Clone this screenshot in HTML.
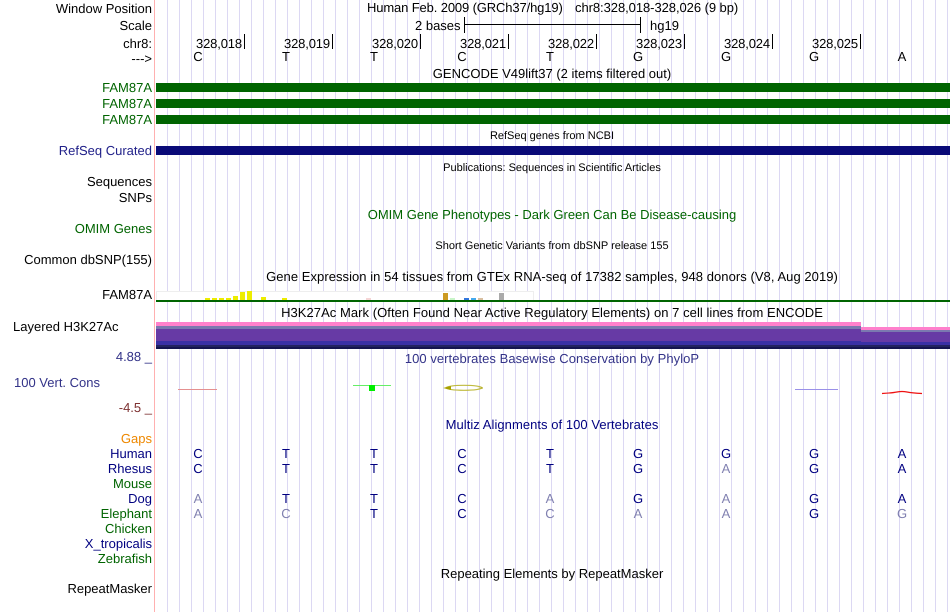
<!DOCTYPE html>
<html><head><meta charset="utf-8"><style>
html,body{margin:0;padding:0;background:#fff}
#p{position:relative;width:950px;height:612px;overflow:hidden;background:#fff;font:13px/14px "Liberation Sans",sans-serif;color:#000;text-rendering:geometricPrecision}
.v{position:absolute;top:0;width:1px;height:612px;background:#dcd8f3}
.r{position:absolute;right:798px;white-space:nowrap}
.c{position:absolute;white-space:nowrap;transform:translateX(-50%)}
.b{position:absolute;background:#006400;left:156px;width:794px;height:9px}
.k{position:absolute;background:#000;width:1px;height:15px;top:34px}
.s{position:absolute;white-space:nowrap}
.m{letter-spacing:-.15px}
.w{letter-spacing:.05px}
.n{color:#000080}.g{color:#006400}.f{color:#8080b0}
.t{font-size:11px}
</style></head><body><div id="p">
<div class="v" style="left:167px"></div><div class="v" style="left:179px"></div><div class="v" style="left:191px"></div><div class="v" style="left:203px"></div><div class="v" style="left:215px"></div><div class="v" style="left:227px"></div><div class="v" style="left:239px"></div><div class="v" style="left:251px"></div><div class="v" style="left:263px"></div><div class="v" style="left:275px"></div><div class="v" style="left:287px"></div><div class="v" style="left:299px"></div><div class="v" style="left:311px"></div><div class="v" style="left:323px"></div><div class="v" style="left:335px"></div><div class="v" style="left:347px"></div><div class="v" style="left:359px"></div><div class="v" style="left:371px"></div><div class="v" style="left:383px"></div><div class="v" style="left:395px"></div><div class="v" style="left:407px"></div><div class="v" style="left:419px"></div><div class="v" style="left:431px"></div><div class="v" style="left:443px"></div><div class="v" style="left:455px"></div><div class="v" style="left:467px"></div><div class="v" style="left:479px"></div><div class="v" style="left:491px"></div><div class="v" style="left:503px"></div><div class="v" style="left:515px"></div><div class="v" style="left:527px"></div><div class="v" style="left:539px"></div><div class="v" style="left:551px"></div><div class="v" style="left:563px"></div><div class="v" style="left:575px"></div><div class="v" style="left:587px"></div><div class="v" style="left:599px"></div><div class="v" style="left:611px"></div><div class="v" style="left:623px"></div><div class="v" style="left:635px"></div><div class="v" style="left:647px"></div><div class="v" style="left:659px"></div><div class="v" style="left:671px"></div><div class="v" style="left:683px"></div><div class="v" style="left:695px"></div><div class="v" style="left:707px"></div><div class="v" style="left:719px"></div><div class="v" style="left:731px"></div><div class="v" style="left:743px"></div><div class="v" style="left:755px"></div><div class="v" style="left:767px"></div><div class="v" style="left:779px"></div><div class="v" style="left:791px"></div><div class="v" style="left:803px"></div><div class="v" style="left:815px"></div><div class="v" style="left:827px"></div><div class="v" style="left:839px"></div><div class="v" style="left:851px"></div><div class="v" style="left:863px"></div><div class="v" style="left:875px"></div><div class="v" style="left:887px"></div><div class="v" style="left:899px"></div><div class="v" style="left:911px"></div><div class="v" style="left:923px"></div><div class="v" style="left:935px"></div><div class="v" style="left:947px"></div>
<div class="s" style="left:154px;top:0;width:1px;height:612px;background:#ffb0b0"></div>

<div class="r" style="top:2px">Window Position</div>
<div class="r" style="top:19px">Scale</div>
<div class="r" style="top:37px">chr8:</div>
<div class="r" style="top:52px">---&gt;</div>
<div class="r g" style="top:81px">FAM87A</div>
<div class="r g" style="top:97px">FAM87A</div>
<div class="r g" style="top:113px">FAM87A</div>
<div class="r n" style="top:144px;color:#22228a">RefSeq Curated</div>
<div class="r" style="top:175px">Sequences</div>
<div class="r" style="top:191px">SNPs</div>
<div class="r g" style="top:222px">OMIM Genes</div>
<div class="r" style="top:253px">Common dbSNP(155)</div>
<div class="r" style="top:288px">FAM87A</div>
<div class="s" style="left:13px;top:320px">Layered H3K27Ac</div>
<div class="r" style="top:350px;color:#333388">4.88 _</div>
<div class="s" style="left:14px;top:376px;color:#333388">100 Vert. Cons</div>
<div class="r" style="top:401px;color:#7f3333">-4.5 _</div>
<div class="r" style="top:432px;color:#ee8800">Gaps</div>
<div class="r n" style="top:447px">Human</div>
<div class="r n" style="top:462px">Rhesus</div>
<div class="r g" style="top:477px">Mouse</div>
<div class="r n" style="top:492px">Dog</div>
<div class="r g" style="top:507px">Elephant</div>
<div class="r g" style="top:522px">Chicken</div>
<div class="r n" style="top:537px">X_tropicalis</div>
<div class="r g" style="top:552px">Zebrafish</div>
<div class="r" style="top:582px">RepeatMasker</div>

<div class="s" style="left:367px;top:1px;letter-spacing:-.13px">Human Feb. 2009 (GRCh37/hg19)</div>
<div class="s" style="left:575px;top:1px;letter-spacing:-.06px">chr8:328,018-328,026 (9 bp)</div>
<div class="s" style="left:415px;top:19px">2 bases</div>
<div class="s" style="left:650px;top:19px">hg19</div>
<div class="s" style="left:464px;top:17px;width:1px;height:16px;background:#000"></div>
<div class="s" style="left:640px;top:17px;width:1px;height:16px;background:#000"></div>
<div class="s" style="left:464px;top:24px;width:176px;height:1px;background:#000"></div>

<div class="s m" style="left:196px;top:37px">328,018</div><div class="k" style="left:244px"></div>
<div class="s m" style="left:284px;top:37px">328,019</div><div class="k" style="left:332px"></div>
<div class="s m" style="left:372px;top:37px">328,020</div><div class="k" style="left:420px"></div>
<div class="s m" style="left:460px;top:37px">328,021</div><div class="k" style="left:508px"></div>
<div class="s m" style="left:548px;top:37px">328,022</div><div class="k" style="left:596px"></div>
<div class="s m" style="left:636px;top:37px">328,023</div><div class="k" style="left:684px"></div>
<div class="s m" style="left:724px;top:37px">328,024</div><div class="k" style="left:772px"></div>
<div class="s m" style="left:812px;top:37px">328,025</div><div class="k" style="left:860px"></div>

<div class="c" style="left:198px;top:50px">C</div><div class="c" style="left:286px;top:50px">T</div><div class="c" style="left:374px;top:50px">T</div><div class="c" style="left:462px;top:50px">C</div><div class="c" style="left:550px;top:50px">T</div><div class="c" style="left:638px;top:50px">G</div><div class="c" style="left:726px;top:50px">G</div><div class="c" style="left:814px;top:50px">G</div><div class="c" style="left:902px;top:50px">A</div>

<div class="c" style="left:552px;top:67px">GENCODE V49lift37 (2 items filtered out)</div>
<div class="b" style="top:83px"></div><div class="b" style="top:99px"></div><div class="b" style="top:115px"></div>
<div class="c t" style="left:552px;top:129px">RefSeq genes from NCBI</div>
<div class="b" style="top:146px;background:#0a0a78"></div>
<div class="c t" style="left:552px;top:161px">Publications: Sequences in Scientific Articles</div>
<div class="c g" style="left:552px;top:208px">OMIM Gene Phenotypes - Dark Green Can Be Disease-causing</div>
<div class="c t" style="left:552px;top:239px">Short Genetic Variants from dbSNP release 155</div>
<div class="c w" style="left:552px;top:270px">Gene Expression in 54 tissues from GTEx RNA-seq of 17382 samples, 948 donors (V8, Aug 2019)</div>

<div class="s" style="left:156px;top:291px;width:378px;height:9px;background:#fff;border-top:1px solid #eee;border-left:1px solid #eee;border-right:1px solid #eee;box-sizing:border-box"></div>
<div class="s" style="left:205px;top:298px;width:5px;height:2px;background:#eded00"></div>
<div class="s" style="left:212px;top:298px;width:5px;height:2px;background:#eded00"></div>
<div class="s" style="left:219px;top:298px;width:5px;height:2px;background:#eded00"></div>
<div class="s" style="left:226px;top:298px;width:5px;height:2px;background:#eded00"></div>
<div class="s" style="left:233px;top:296px;width:5px;height:4px;background:#eded00"></div>
<div class="s" style="left:240px;top:292px;width:5px;height:8px;background:#eded00"></div>
<div class="s" style="left:247px;top:291px;width:5px;height:9px;background:#eded00"></div>
<div class="s" style="left:261px;top:297px;width:5px;height:3px;background:#eded00"></div>
<div class="s" style="left:282px;top:298px;width:5px;height:2px;background:#eded00"></div>
<div class="s" style="left:366px;top:298px;width:5px;height:2px;background:#f5d5d5"></div>
<div class="s" style="left:443px;top:293px;width:5px;height:7px;background:#cc9a22"></div>
<div class="s" style="left:450px;top:298px;width:5px;height:2px;background:#c8f5c8"></div>
<div class="s" style="left:464px;top:298px;width:5px;height:2px;background:#3377dd"></div>
<div class="s" style="left:471px;top:298px;width:5px;height:2px;background:#44aaee"></div>
<div class="s" style="left:478px;top:298px;width:5px;height:2px;background:#d8bfa0"></div>
<div class="s" style="left:499px;top:293px;width:5px;height:7px;background:#aaaaaa"></div>
<div class="b" style="top:300px;height:2px"></div>

<div class="c w" style="left:552px;top:306px">H3K27Ac Mark (Often Found Near Active Regulatory Elements) on 7 cell lines from ENCODE</div>

<div class="s" style="left:156px;top:322px;width:705px;height:4px;background:#ff80cc"></div>
<div class="s" style="left:156px;top:326px;width:705px;height:3px;background:#7b78b0"></div>
<div class="s" style="left:156px;top:329px;width:705px;height:12px;background:#673aa5"></div>
<div class="s" style="left:156px;top:341px;width:705px;height:4px;background:#3a30a5"></div>
<div class="s" style="left:156px;top:345px;width:705px;height:2px;background:#23235f"></div>
<div class="s" style="left:156px;top:347px;width:794px;height:2px;background:#14144f"></div>
<div class="s" style="left:861px;top:327px;width:89px;height:3px;background:#ff80cc"></div>
<div class="s" style="left:861px;top:330px;width:89px;height:2px;background:#7b78b0"></div>
<div class="s" style="left:861px;top:332px;width:89px;height:10px;background:#673aa5"></div>
<div class="s" style="left:861px;top:342px;width:89px;height:3px;background:#3a30a5"></div>
<div class="s" style="left:861px;top:345px;width:89px;height:2px;background:#23235f"></div>

<div class="c w" style="left:552px;top:352px;color:#333388">100 vertebrates Basewise Conservation by PhyloP</div>

<svg class="s" style="left:156px;top:375px" width="794" height="30" viewBox="156 375 794 30">
<path d="M178 389.5H217" stroke="#e59090" stroke-width="1" fill="none"/>
<path d="M353 385.5H391" stroke="#66ee66" stroke-width="1" fill="none"/>
<rect x="369" y="385" width="6" height="6" fill="#00ee00"/>
<ellipse cx="464" cy="387.8" rx="18" ry="2.5" fill="none" stroke="#c0bb40" stroke-width="1.1"/>
<path d="M443 388L451 386V390Z" fill="#a8a000"/>
<path d="M477 388L483 387.5V388.5Z" fill="#a8a000"/>
<path d="M795 389.5H838" stroke="#9a90e8" stroke-width="1" fill="none"/>
<path d="M882 393.5Q892 393 897 392Q902 391 907 392Q912 393 922 393.5" stroke="#ee1111" stroke-width="1.2" fill="none"/>
</svg>

<div class="c w" style="left:552px;top:418px;color:#000080">Multiz Alignments of 100 Vertebrates</div>

<div class="c n" style="left:198px;top:447px">C</div><div class="c n" style="left:286px;top:447px">T</div><div class="c n" style="left:374px;top:447px">T</div><div class="c n" style="left:462px;top:447px">C</div><div class="c n" style="left:550px;top:447px">T</div><div class="c n" style="left:638px;top:447px">G</div><div class="c n" style="left:726px;top:447px">G</div><div class="c n" style="left:814px;top:447px">G</div><div class="c n" style="left:902px;top:447px">A</div>
<div class="c n" style="left:198px;top:462px">C</div><div class="c n" style="left:286px;top:462px">T</div><div class="c n" style="left:374px;top:462px">T</div><div class="c n" style="left:462px;top:462px">C</div><div class="c n" style="left:550px;top:462px">T</div><div class="c n" style="left:638px;top:462px">G</div><div class="c f" style="left:726px;top:462px">A</div><div class="c n" style="left:814px;top:462px">G</div><div class="c n" style="left:902px;top:462px">A</div>
<div class="c f" style="left:198px;top:492px">A</div><div class="c n" style="left:286px;top:492px">T</div><div class="c n" style="left:374px;top:492px">T</div><div class="c n" style="left:462px;top:492px">C</div><div class="c f" style="left:550px;top:492px">A</div><div class="c n" style="left:638px;top:492px">G</div><div class="c f" style="left:726px;top:492px">A</div><div class="c n" style="left:814px;top:492px">G</div><div class="c n" style="left:902px;top:492px">A</div>
<div class="c f" style="left:198px;top:507px">A</div><div class="c f" style="left:286px;top:507px">C</div><div class="c n" style="left:374px;top:507px">T</div><div class="c n" style="left:462px;top:507px">C</div><div class="c f" style="left:550px;top:507px">C</div><div class="c f" style="left:638px;top:507px">A</div><div class="c f" style="left:726px;top:507px">A</div><div class="c n" style="left:814px;top:507px">G</div><div class="c f" style="left:902px;top:507px">G</div>

<div class="c" style="left:552px;top:567px">Repeating Elements by RepeatMasker</div>
</div></body></html>
